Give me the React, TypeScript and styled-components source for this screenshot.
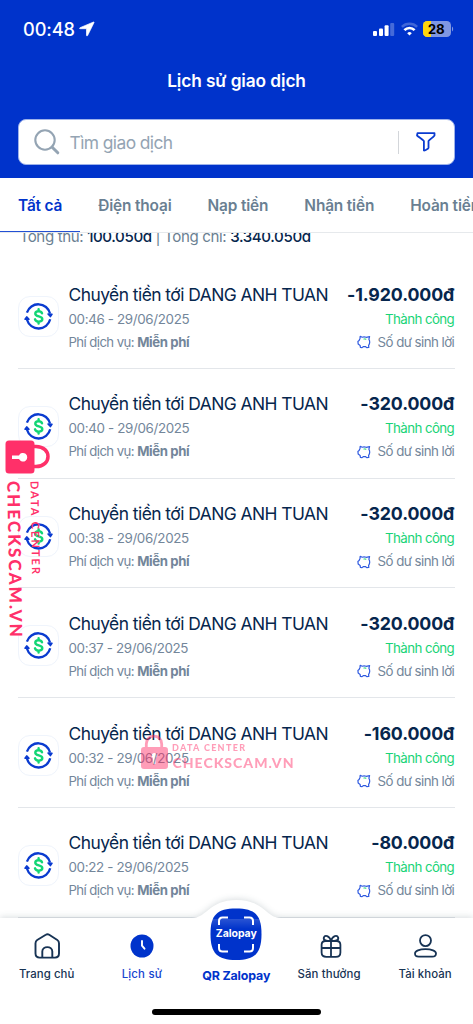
import React from "react";
import styled, { createGlobalStyle } from "styled-components";

const Global = createGlobalStyle`
  * { box-sizing: border-box; }
  html, body { margin: 0; padding: 0; background: #fff; }
  body { font-family: Inter, "Liberation Sans", sans-serif; overflow: hidden; }
`;

const Screen = styled.main`
  position: relative;
  width: 473px;
  height: 1024px;
  overflow: hidden;
  display: flex;
  flex-direction: column;
  background: #fff;
  color: #06264d;
`;

const Txt = styled.span<{ $size: number; $weight?: number; $color?: string; $ls?: number; $lh?: number }>`
  font-size: ${(p) => p.$size}px;
  font-weight: ${(p) => p.$weight ?? 400};
  color: ${(p) => p.$color ?? "inherit"};
  letter-spacing: ${(p) => p.$ls ?? 0}px;
  line-height: ${(p) => p.$lh ?? 20}px;
  white-space: nowrap;
  b { letter-spacing: -0.38px; }
`;

const Header = styled.header`
  flex: none;
  height: 178px;
  background: #0033cb;
  color: #fff;
  display: flex;
  flex-direction: column;
`;

const StatusBar = styled.div`
  height: 58px;
  padding: 0 19px 0 23px;
  display: flex;
  align-items: center;
  justify-content: space-between;
`;

const StatusGroup = styled.div<{ $gap: number }>`
  display: flex;
  align-items: center;
  gap: ${(p) => p.$gap}px;
`;

const PageTitle = styled.h1`
  margin: 0;
  height: 61px;
  padding-top: 12px;
  text-align: center;
  font-size: 17.3px;
  font-weight: 600;
  line-height: 22px;
  letter-spacing: -0.1px;
`;

const SearchBox = styled.div`
  margin: 0 18px;
  height: 46px;
  border: 1px solid #9db2ea;
  border-radius: 8px;
  background: #fff;
  display: flex;
  align-items: center;
  padding: 0 18px 0 15px;
`;

const SearchHint = styled.div`
  flex: 1;
  margin-left: 9.5px;
  color: #94a4b3;
  font-size: 17.4px;
  letter-spacing: -0.58px;
`;

const SearchRule = styled.i`
  width: 1px;
  height: 23px;
  background: #d3d6da;
  margin-right: 17px;
`;

const Tabs = styled.nav`
  flex: none;
  height: 55px;
  display: flex;
  border-bottom: 1px solid #e6e9ec;
`;

const Tab = styled.div<{ $active?: boolean }>`
  flex: none;
  height: 54px;
  padding: 0 18px;
  line-height: 56px;
  white-space: nowrap;
  font-size: 15.4px;
  font-weight: 600;
  letter-spacing: -0.15px;
  color: ${(p) => (p.$active ? "#0033cb" : "#6a7f92")};
  border-bottom: ${(p) => (p.$active ? "1px solid #2350d4" : "none")};
`;

const Content = styled.section`
  flex: 1;
  min-height: 0;
  overflow: hidden;
  padding: 0 18px;
`;

const Summary = styled.div`
  height: 32px;
  margin-top: -6px;
  padding-left: 1.5px;
  font-size: 15.1px;
  line-height: 20px;
  letter-spacing: -0.38px;
  color: #6a7f92;
  white-space: nowrap;
  b { color: #06264d; font-weight: 500; }
`;

const Row = styled.article`
  height: 109.75px;
  border-bottom: 1px solid #e3e6ea;
  display: flex;
  padding-top: 23.5px;
`;

const IconTile = styled.div`
  flex: none;
  width: 41px;
  height: 41px;
  margin-top: 13.5px;
  border: 1px solid #eff4fc;
  border-radius: 12px;
  display: grid;
  place-items: center;
`;

const Details = styled.div`
  flex: 1;
  margin-left: 9.5px;
  display: flex;
  flex-direction: column;
`;

const Amounts = styled.div`
  padding-right: 0.8px;
  display: flex;
  flex-direction: column;
  align-items: flex-end;
`;

const Source = styled.div`
  display: flex;
  align-items: center;
  gap: 6.5px;
`;

const NavBar = styled.footer`
  position: absolute;
  left: 0;
  bottom: 0;
  width: 473px;
  height: 128px;
`;

const NavShape = styled.svg`
  position: absolute;
  inset: 0;
  filter: drop-shadow(0 -1px 3px rgba(20, 50, 60, 0.16));
`;

const NavItems = styled.div`
  position: relative;
  display: grid;
  grid-template-columns: repeat(5, 94.6px);
`;

const NavItem = styled.div<{ $center?: boolean }>`
  display: flex;
  flex-direction: column;
  align-items: center;
  height: 100px;
  padding-top: ${(p) => (p.$center ? 12 : 36)}px;
`;

const NavLabel = styled.span<{ $color: string; $bold?: boolean; $ls: number; $shift?: number }>`
  margin-top: ${(p) => (p.$bold ? 5.5 : 5)}px;
  margin-right: ${(p) => p.$shift ?? 0}px;
  font-size: ${(p) => (p.$bold ? 12.4 : 11.4)}px;
  line-height: 18px;
  font-weight: ${(p) => (p.$bold ? 700 : 500)};
  color: ${(p) => p.$color};
  letter-spacing: ${(p) => p.$ls}px;
  white-space: nowrap;
`;

const HomeIndicator = styled.i`
  position: absolute;
  left: 152px;
  bottom: 9px;
  width: 169px;
  height: 6px;
  border-radius: 3px;
  background: #000;
`;

const SideMark = styled.svg`
  position: absolute;
  left: 0;
  top: 434px;
`;

const CenterMark = styled.svg`
  position: absolute;
  left: 136px;
  top: 730px;
  opacity: 0.47;
`;

const TransferIcon = () => (
  <svg width="29" height="29" viewBox="0 0 29 29" fill="none">
    <path d="M2.900 10.600A12 12 0 0 1 26 11.500M26.200 17.300A12 12 0 0 1 3 17.800" stroke="#0a3bd0" strokeWidth="2.300" />
    <path d="M24 12 28 12.300 26.400 14.600Z" fill="#0a3bd0" stroke="#0a3bd0" strokeWidth="1.500" strokeLinejoin="round" />
    <path d="M1 17.300 2.700 14.900 5 17.200Z" fill="#0a3bd0" stroke="#0a3bd0" strokeWidth="1.500" strokeLinejoin="round" />
    <path d="M18 11.300c-.6-1.500-1.700-2.100-3.400-2.100-2 0-3.300.9-3.300 2.500 0 3.500 7 1.900 7 5.300 0 1.700-1.500 2.600-3.500 2.600-1.900 0-3.300-.7-3.800-2.300M14.600 7.200v2m0 10.400v2" stroke="#12d675" strokeWidth="2.400" strokeLinecap="round" />
  </svg>
);

const PiggyIcon = () => (
  <svg width="14" height="14" viewBox="0 0 14 14" fill="none" stroke="#2f5ae0" strokeWidth="1.200" strokeLinejoin="round">
    <path d="M3 3.400 3.200 1.300 5.200 2.200c1.300-.4 2.800-.3 4 .1l3.400-.6-.7 2.500c.6 1 .9 2 .8 3.200-.1 1.300-.5 2.200-1.100 3l.2 2.100-2.100.1-1-.9H6.200l-1.100.9-1.700-.3-.3-1.900L1.200 9.100.9 6.500l1.200-.9Z" />
    <path d="M6.500 4.200c1-.4 2-.3 2.800.3" stroke="#4fdb91" />
  </svg>
);

const rows = [
  ["00:46", "-1.920.000đ"],
  ["00:40", "-320.000đ"],
  ["00:38", "-320.000đ"],
  ["00:37", "-320.000đ"],
  ["00:32", "-160.000đ"],
  ["00:22", "-80.000đ"],
];

const navy = "#173354";
const grey = "#73869a";

export default function App() {
  return (
    <Screen>
      <Global />
      <Header>
        <StatusBar>
          <StatusGroup $gap={4}>
            <Txt $size={18.2} $weight={500} $ls={-0.1}>00:48</Txt>
            <svg width="16" height="16" viewBox="0 0 16 16"><path d="M14.600 1 1 6.700c-.6.3-.5 1 .2 1h5.900c.3 0 .4.1.4.4v6.200c0 .8.8.9 1.100.2L15 1.600c.2-.5 0-.8-.4-.6Z" fill="#fff" stroke="#fff" strokeWidth=".7" /></svg>
          </StatusGroup>
          <StatusGroup $gap={5.5}>
            <svg width="22" height="14" viewBox="0 0 22 14" fill="#fff">
              <rect x="0" y="9" width="4" height="5" rx="1" /><rect x="6" y="6.500" width="4" height="7.500" rx="1" />
              <rect x="11.600" y="3.300" width="4" height="10.700" rx="1" /><rect x="17.200" y="1" width="4" height="13" rx="1" opacity=".27" />
            </svg>
            <svg width="17" height="14" viewBox="0 0 17 14" fill="none" stroke="#fff" strokeWidth="2.600">
              <path d="M.9 4.900A10.900 10.900 0 0 1 16.100 4.900" opacity=".25" />
              <path d="M3.400 8.200A7 7 0 0 1 13.600 8.200" />
              <path d="M8.500 13.500 6.200 11.200a3.300 3.300 0 0 1 4.600 0Z" fill="#fff" stroke="none" />
            </svg>
            <svg width="31" height="16" viewBox="0 0 31 16">
              <defs><clipPath id="battery"><rect width="28" height="16" rx="4.300" /></clipPath></defs>
              <g clipPath="url(#battery)"><rect width="28" height="16" fill="#7f97e2" /><rect width="8" height="16" fill="#ffd60a" /></g>
              <path d="M29 5.500c1.500.7 1.500 4.300 0 5Z" fill="#7f97e2" />
              <text x="13.200" y="12.700" textAnchor="middle" fontFamily="Inter" fontSize="13.300" fontWeight="700" fill="#000">28</text>
            </svg>
          </StatusGroup>
        </StatusBar>
        <PageTitle>Lịch sử giao dịch</PageTitle>
        <SearchBox>
          <svg width="26" height="26" viewBox="0 0 26 26" fill="none" stroke="#94a4b3" strokeLinecap="round"><circle cx="11" cy="11" r="9.700" strokeWidth="2.100" /><path d="m18.200 18.200 5.600 5.600" strokeWidth="3" /></svg>
          <SearchHint>Tìm giao dịch</SearchHint>
          <SearchRule />
          <svg width="20" height="20" viewBox="0 0 20 20" fill="none" stroke="#0a3bd0" strokeWidth="1.800" strokeLinejoin="round"><path d="M1.500 1.200h17v2.200c0 .7-4.700 4-6 5.600V16c0 .7-4.600 3-4.600 2.400V9C6.500 7.400 1 4 1 3.400Z" /></svg>
        </SearchBox>
      </Header>
      <Tabs>
        <Tab $active>Tất cả</Tab><Tab>Điện thoại</Tab><Tab>Nạp tiền</Tab><Tab>Nhận tiền</Tab><Tab>Hoàn tiền</Tab>
      </Tabs>
      <Content>
        <Summary>Tổng thu: <b>100.050đ</b> | Tổng chi: <b>3.340.050đ</b></Summary>
        {rows.map(([time, amount]) => (
          <Row key={time}>
            <IconTile><TransferIcon /></IconTile>
            <Details>
              <Txt $size={17.4} $ls={-0.53} $lh={24}>Chuyển tiền tới DANG ANH TUAN</Txt>
              <Txt $size={13.4} $color={grey} $lh={25} $ls={-0.36}>{time} - 29/06/2025</Txt>
              <Txt $size={13.2} $color={grey} $lh={21} $ls={-0.58}>Phí dịch vụ: <b>Miễn phí</b></Txt>
            </Details>
            <Amounts>
              <Txt $size={17.8} $weight={700} $ls={-0.12} $lh={24}>{amount}</Txt>
              <Txt $size={13.3} $color="#19d477" $lh={25} $ls={-0.58}>Thành công</Txt>
              <Source><PiggyIcon /><Txt $size={13.3} $color={grey} $lh={21} $ls={-0.56}>Số dư sinh lời</Txt></Source>
            </Amounts>
          </Row>
        ))}
      </Content>
      <NavBar>
        <NavShape width="473" height="128" viewBox="0 0 473 128"><path d="M0 22H192C207 22 209 4 236.500 4S266 22 281 22H473V128H0Z" fill="#fff" /></NavShape>
        <NavItems>
          <NavItem>
            <svg width="27" height="28" viewBox="0 0 27 28" fill="none" stroke={navy} strokeWidth="1.900" strokeLinejoin="round"><path d="M1.500 11.200c0-1.500.5-2.400 1.700-3.200l8.600-5.200c1.200-.8 2.200-.8 3.400 0L23.300 8c1.200.8 1.700 1.700 1.700 3.200v10.400c0 2.500-1.500 4-4 4H5.500c-2.500 0-4-1.500-4-4Z" /><path d="M8.300 25.600v-6c0-6 10-6 10 0v6" /></svg>
            <NavLabel $color={navy} $ls={0.08} $shift={1.2}>Trang chủ</NavLabel>
          </NavItem>
          <NavItem>
            <svg width="24" height="28" viewBox="0 0 24 28"><circle cx="12" cy="14" r="11.500" fill="#0033cb" /><path d="M12 9v4.700l2.500 3" fill="none" stroke="#fff" strokeWidth="1.900" strokeLinecap="round" /></svg>
            <NavLabel $color="#1745d0" $ls={0.2}>Lịch sử</NavLabel>
          </NavItem>
          <NavItem $center>
            <svg width="52" height="53" viewBox="0 0 52 53">
              <defs><linearGradient id="sheen" x1="0" y1="0" x2="0" y2="1"><stop offset="0" stopColor="#fff" stopOpacity=".16" /><stop offset="1" stopColor="#fff" stopOpacity="0" /></linearGradient></defs>
              <path d="M26 .5C45 .5 51.500 7 51.500 26S45 52 26 52 .5 45 .5 26 7 .5 26 .5Z" fill="#0033cb" />
              <rect x="2" y="11" width="48" height="10" fill="url(#sheen)" />
              <path d="M9 17v-4c0-2.500 1-3.500 3.500-3.500H18M34 9.500h5.500c2.500 0 3.500 1 3.500 3.500v4M9 36v4c0 2.500 1 3.500 3.500 3.500H18M34 43.500h5.500c2.500 0 3.500-1 3.500-3.500v-4" fill="none" stroke="#fff" strokeWidth="2" />
              <text x="26.300" y="29" textAnchor="middle" fontFamily="Inter" fontSize="10.500" fontWeight="700" fill="#fff" textLength="41">Zalopay</text>
            </svg>
            <NavLabel $color="#0033cb" $bold $ls={-0.14} $shift={0.6}>QR Zalopay</NavLabel>
          </NavItem>
          <NavItem>
            <svg width="22" height="28" viewBox="0 0 22 28" fill="none" stroke={navy} strokeWidth="1.800"><path d="M5.500 9h11c2.600 0 3.900 1.300 3.900 3.800v7.600c0 3-1.600 4.400-4.600 4.400H6.200c-3 0-4.600-1.400-4.600-4.400v-7.600C1.600 10.300 2.900 9 5.500 9ZM1.600 16h18.800M11 9v15.800M11 9C6 9 3.200 8 3.800 5.600 4.800 2.800 9.500 3.300 11 9c1.500-5.700 6.200-6.200 7.200-3.400C18.800 8 16 9 11 9Z" /></svg>
            <NavLabel $color={navy} $ls={0.12} $shift={4}>Săn thưởng</NavLabel>
          </NavItem>
          <NavItem>
            <svg width="24" height="28" viewBox="0 0 24 28" fill="none" stroke={navy} strokeWidth="1.800"><circle cx="11.500" cy="8.600" r="5.500" /><path d="M1 21.500c0-2.500 4.500-4.300 10.500-4.300S22 19 22 21.500s-1.300 3.200-3.700 3.200H4.700c-2.400 0-3.700-.7-3.700-3.200Z" /></svg>
            <NavLabel $color={navy} $ls={0.08} $shift={1.2}>Tài khoản</NavLabel>
          </NavItem>
        </NavItems>
        <HomeIndicator />
      </NavBar>
      <SideMark width="56" height="210" viewBox="0 0 56 210" fill="#ff3069">
        <path d="M34 12.500h2c16 0 16 20 0 20h-2" fill="none" stroke="#ff3069" strokeWidth="3.500" />
        <path fillRule="evenodd" d="M9 6.500h22a3.500 3.500 0 0 1 3.500 3.500v26a3.500 3.500 0 0 1-3.500 3.500H9A3.500 3.500 0 0 1 5.500 36V10A3.500 3.500 0 0 1 9 6.500ZM12 21.500v3.500h7a4.300 4.300 0 1 0 0-3.500Z" />
        <text transform="translate(7.300 47) rotate(89)" fontFamily="Lato" fontSize="17" fontWeight="900" textLength="156">CHECKSCAM.VN</text>
        <text transform="translate(30.500 47) rotate(89)" fontFamily="Lato" fontSize="11" fontWeight="700" textLength="93">DATA CENTER</text>
      </SideMark>
      <CenterMark width="170" height="45" viewBox="0 0 170 45" fill="#ff3069">
        <path d="M10.300 18v-4c0-10.500 15.400-10.500 15.400 0v4" fill="none" stroke="#ff3069" strokeWidth="2.800" />
        <path fillRule="evenodd" d="M8 17h21a3 3 0 0 1 3 3v16a3 3 0 0 1-3 3H8a3 3 0 0 1-3-3V20a3 3 0 0 1 3-3ZM17 28v6h2.500v-6a2.600 2.600 0 1 0-2.500 0Z" />
        <text x="36" y="21" fontFamily="Lato" fontSize="9" fontWeight="900" textLength="73">DATA CENTER</text>
        <text x="36.500" y="38" fontFamily="Lato" fontSize="14" fontWeight="900" textLength="121">CHECKSCAM.VN</text>
      </CenterMark>
    </Screen>
  );
}
